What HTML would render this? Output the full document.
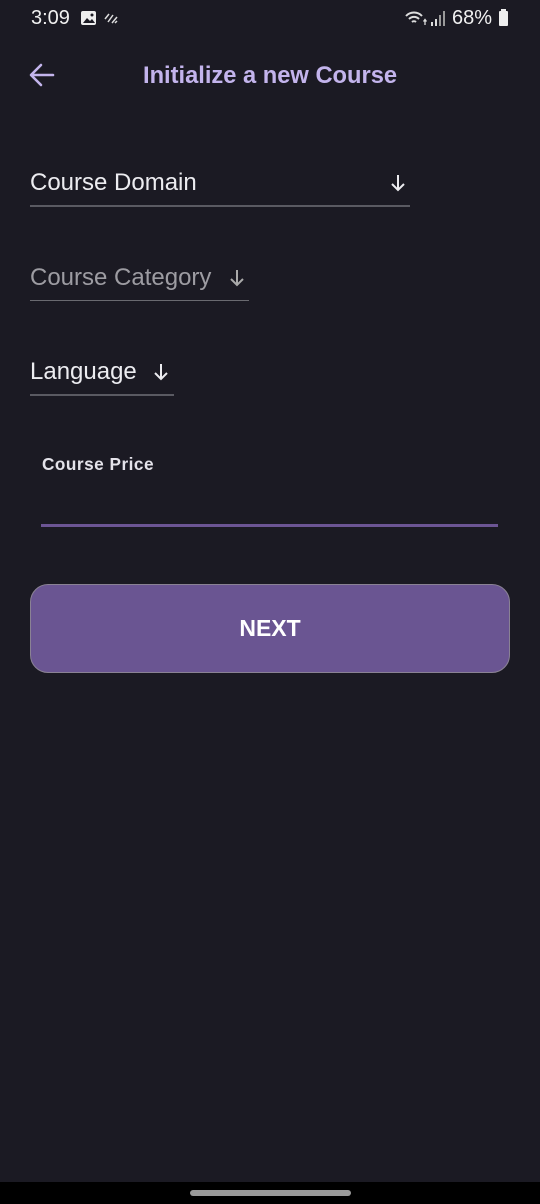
<!DOCTYPE html>
<html><head><meta charset="utf-8"><style>
*{margin:0;padding:0;box-sizing:border-box}
body{width:540px;height:1204px;background:#1b1a23;font-family:"Liberation Sans",sans-serif;position:relative;overflow:hidden;color:#ececf0}
.a{position:absolute}
</style></head><body>
<div class="a" style="left:31px;top:7px;font-size:20px;color:#f0f0f0">3:09</div>
<svg class="a" style="left:80px;top:10px" width="18" height="16" viewBox="0 0 18 16"><rect x="1" y="1" width="15" height="14" rx="2" fill="#eee"/><path d="M3 13l4-5 3 3 2-2 3 4z" fill="#1b1a23"/><circle cx="12" cy="5" r="1.5" fill="#1b1a23"/></svg>
<svg class="a" style="left:103px;top:11px" width="16" height="14" viewBox="0 0 16 14" stroke="#ddd" stroke-width="1.5"><path d="M2 8l4-5M5 11l5-7M9 12l5-6M12 12l2-2"/></svg>
<svg class="a" style="left:405px;top:9px" width="46" height="18" viewBox="0 0 46 18"><path d="M1 7a11 11 0 0 1 16 0M4 10a7 7 0 0 1 10 0M7 13a3 3 0 0 1 4 0" stroke="#ddd" stroke-width="2" fill="none"/><path d="M20 16v-5M18.5 12.5l1.5-2 1.5 2" stroke="#ddd" stroke-width="1.3" fill="none"/><rect x="26" y="13" width="2" height="4" fill="#ddd"/><rect x="30" y="10" width="2" height="7" fill="#ddd"/><rect x="34" y="6" width="2" height="11" fill="#999"/><rect x="38" y="2" width="2" height="15" fill="#999"/></svg>
<div class="a" style="left:452px;top:7px;font-size:20px;color:#f0f0f0">68%</div>
<div class="a" style="left:499px;top:11px;width:9px;height:15px;background:#eee;border-radius:1px"></div>
<div class="a" style="left:501px;top:9px;width:5px;height:3px;background:#eee"></div>

<svg class="a" style="left:28px;top:62px" width="28" height="26" viewBox="0 0 28 26" stroke="#c3b4ec" stroke-width="2.6" fill="none" stroke-linecap="round" stroke-linejoin="round"><path d="M25 13H4M13 3L3 13l10 10"/></svg>
<div class="a" style="left:143px;top:63px;font-size:23.7px;font-weight:bold;color:#c3b4ec">Initialize a new Course</div>

<div class="a" style="left:30px;top:169px;font-size:24px;color:#ececf0">Course Domain</div>
<svg class="a" style="left:388px;top:173px" width="20" height="20" viewBox="0 0 20 20" stroke="#ececf0" stroke-width="2" fill="none"><path d="M10 2v15M4 11l6 6 6-6"/></svg>
<div class="a" style="left:30px;top:205px;width:380px;height:2px;background:#5a5a62"></div>

<div class="a" style="left:30px;top:264px;font-size:24px;color:#9d9ca2">Course Category</div>
<svg class="a" style="left:227px;top:268px" width="20" height="20" viewBox="0 0 20 20" stroke="#aaa" stroke-width="2" fill="none"><path d="M10 2v15M4 11l6 6 6-6"/></svg>
<div class="a" style="left:30px;top:300px;width:219px;height:1px;background:#6a6a70"></div>

<div class="a" style="left:30px;top:358px;font-size:24px;color:#ececf0">Language</div>
<svg class="a" style="left:151px;top:362px" width="20" height="20" viewBox="0 0 20 20" stroke="#ececf0" stroke-width="2" fill="none"><path d="M10 2v15M4 11l6 6 6-6"/></svg>
<div class="a" style="left:30px;top:394px;width:144px;height:2px;background:#5a5a62"></div>

<div class="a" style="left:42px;top:454px;font-size:17.2px;font-weight:bold;color:#e4e3ea;letter-spacing:0.5px">Course Price</div>
<div class="a" style="left:41px;top:524px;width:457px;height:3px;background:#6c5594"></div>

<div class="a" style="left:30px;top:584px;width:480px;height:89px;background:#6a5592;border:1.5px solid #8a8294;border-radius:18px"></div>
<div class="a" style="left:30px;top:615px;width:480px;text-align:center;font-size:23px;font-weight:bold;color:#fff">NEXT</div>

<div class="a" style="left:0;top:1182px;width:540px;height:22px;background:#000"></div>
<div class="a" style="left:190px;top:1190px;width:161px;height:6px;border-radius:3px;background:#9a9a9a"></div>
</body></html>
